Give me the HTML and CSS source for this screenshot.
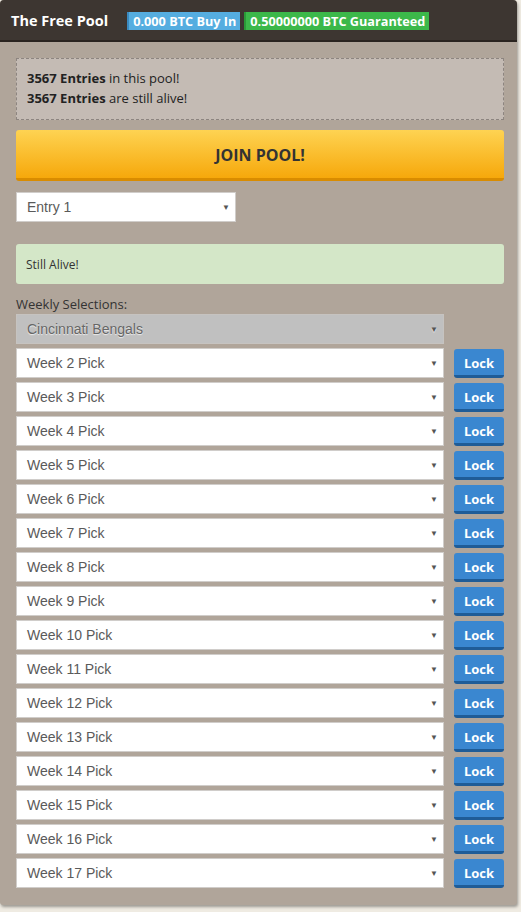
FILE: index.html
```html
<!DOCTYPE html>
<html>
<head>
<meta charset="utf-8">
<link rel="stylesheet" href="styles.css">
</head>
<body>
<div class="card">
  <div class="card-head">
    <span class="title">The Free Pool</span>
    <span class="badge badge-blue">0.000 BTC Buy In</span>
    <span class="badge badge-green">0.50000000 BTC Guaranteed</span>
  </div>
  <div class="card-body">
    <div class="info">
      <div><b>3567 Entries</b> in this pool!</div>
      <div><b>3567 Entries</b> are still alive!</div>
    </div>
    <button class="join">JOIN POOL!</button>
    <div class="select entry"><span>Entry 1</span><i class="arrow">▼</i></div>
    <div class="alive">Still Alive!</div>
    <div class="label">Weekly Selections:</div>
    <div class="rows">
      <div class="row">
        <div class="select disabled"><span>Cincinnati Bengals</span><i class="arrow">▼</i></div>
        <div class="spacer"></div>
      </div>
      <div class="row"><div class="select"><span>Week 2 Pick</span><i class="arrow">▼</i></div><button class="lock">Lock</button></div>
      <div class="row"><div class="select"><span>Week 3 Pick</span><i class="arrow">▼</i></div><button class="lock">Lock</button></div>
      <div class="row"><div class="select"><span>Week 4 Pick</span><i class="arrow">▼</i></div><button class="lock">Lock</button></div>
      <div class="row"><div class="select"><span>Week 5 Pick</span><i class="arrow">▼</i></div><button class="lock">Lock</button></div>
      <div class="row"><div class="select"><span>Week 6 Pick</span><i class="arrow">▼</i></div><button class="lock">Lock</button></div>
      <div class="row"><div class="select"><span>Week 7 Pick</span><i class="arrow">▼</i></div><button class="lock">Lock</button></div>
      <div class="row"><div class="select"><span>Week 8 Pick</span><i class="arrow">▼</i></div><button class="lock">Lock</button></div>
      <div class="row"><div class="select"><span>Week 9 Pick</span><i class="arrow">▼</i></div><button class="lock">Lock</button></div>
      <div class="row"><div class="select"><span>Week 10 Pick</span><i class="arrow">▼</i></div><button class="lock">Lock</button></div>
      <div class="row"><div class="select"><span>Week 11 Pick</span><i class="arrow">▼</i></div><button class="lock">Lock</button></div>
      <div class="row"><div class="select"><span>Week 12 Pick</span><i class="arrow">▼</i></div><button class="lock">Lock</button></div>
      <div class="row"><div class="select"><span>Week 13 Pick</span><i class="arrow">▼</i></div><button class="lock">Lock</button></div>
      <div class="row"><div class="select"><span>Week 14 Pick</span><i class="arrow">▼</i></div><button class="lock">Lock</button></div>
      <div class="row"><div class="select"><span>Week 15 Pick</span><i class="arrow">▼</i></div><button class="lock">Lock</button></div>
      <div class="row"><div class="select"><span>Week 16 Pick</span><i class="arrow">▼</i></div><button class="lock">Lock</button></div>
      <div class="row"><div class="select"><span>Week 17 Pick</span><i class="arrow">▼</i></div><button class="lock">Lock</button></div>
    </div>
  </div>
</div>
</body>
</html>
```
FILE: styles.css
```css
html, body {
  margin: 0;
  padding: 0;
  background: #efebe2;
}
body {
  font-family: "Open Sans", "Liberation Sans", sans-serif;
  color: #333;
  height: 912px;
  overflow: hidden;
}
.card {
  width: 517px;
  background: #b0a59a;
  border-radius: 4px 4px 3px 3px;
  box-shadow: 1px 2px 3px rgba(0,0,0,0.35);
  padding-bottom: 17px;
}
.card-head {
  height: 42px;
  background: #3d3631;
  border-bottom: 2px solid #2a2420;
  border-radius: 4px 4px 0 0;
  display: flex;
  align-items: center;
  padding-left: 11px;
  box-sizing: border-box;
}
.title {
  color: #fff;
  font-weight: 700;
  font-size: 14.5px;
  margin-right: 19px;
  margin-top: 0;
}
.badge {
  color: #fff;
  font-weight: 700;
  font-size: 12.7px;
  height: 18px;
  line-height: 18px;
  padding: 0 4px;
  margin-top: 2px;
}
.badge-blue {
  background: #55ade0;
  border-left: 2px solid #3a8ac0;
  margin-right: 4px;
}
.badge-green {
  background: #3cb84a;
  border-left: 2px solid #2a9a38;
}
.card-body {
  padding: 16px 13px 0 16px;
}
.info {
  border: 1px dashed #8d8580;
  background: #c4bbb4;
  font-size: 13px;
  line-height: 20px;
  padding: 9px 10px 11px 10px;
  color: #222;
}
.info b { color: #222; }
.join {
  display: block;
  width: 100%;
  margin-top: 10px;
  height: 51px;
  border: 0;
  border-bottom: 3px solid #d98c00;
  border-radius: 3px;
  background: linear-gradient(#fed352, #f6a80b);
  font-family: "Open Sans", sans-serif;
  font-weight: 700;
  font-size: 16px;
  color: #333;
  padding: 0;
  padding-top: 2px;
}
.select {
  display: flex;
  align-items: center;
  height: 30px;
  box-sizing: border-box;
  border: 1px solid #d0cdca;
  background: #fff;
  font-family: "Liberation Sans", Arial, sans-serif;
  font-size: 14px;
  color: #5a5a5a;
  padding: 0 5px 0 10px;
}
.select span { flex: 1; }
.arrow {
  font-style: normal;
  font-size: 8px;
  color: #555;
}
.entry {
  width: 220px;
  margin-top: 11px;
}
.alive {
  margin-top: 22px;
  background: #d4e7c8;
  border-radius: 3px;
  height: 40px;
  display: flex;
  align-items: center;
  padding-left: 10px;
  font-size: 12px;
  color: #333;
}
.label {
  margin-top: 12px;
  font-size: 13px;
  line-height: 16px;
  color: #333;
}
.rows {
  margin-top: 2px;
  display: flex;
  flex-direction: column;
  gap: 4px;
}
.row {
  display: flex;
  gap: 10px;
  align-items: flex-start;
}
.row .select { flex: 1; }
.select.disabled {
  background: #c0c0c0;
  border-color: #c6c3c0;
  color: #666;
  text-shadow: 0 1px 1px #eee;
}
.spacer, .lock { width: 50px; flex: none; }
.lock {
  height: 29px;
  margin-top: 1px;
  border: 0;
  border-bottom: 3px solid #1f5c97;
  border-radius: 3px;
  background: #3a87d0;
  color: #fff;
  font-family: "Open Sans", sans-serif;
  font-weight: 700;
  font-size: 13px;
  padding: 0;
  padding-top: 2px;
}
```
